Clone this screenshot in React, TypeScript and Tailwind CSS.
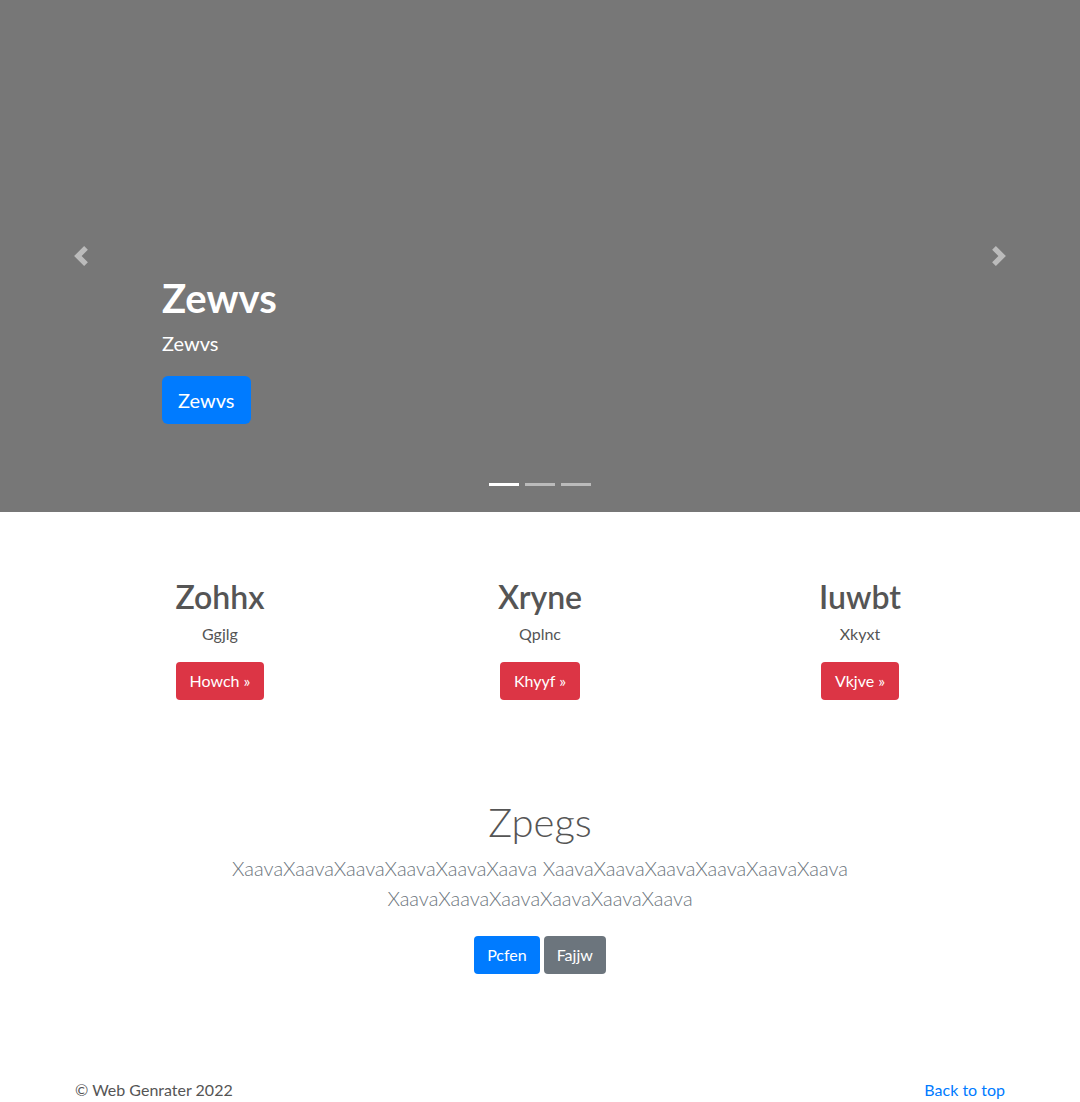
import React from "react";

const font = { fontFamily: "Lato, 'Noto Sans', 'Liberation Sans', sans-serif" };

function Prev() {
  return (
    <svg width="20" height="20" viewBox="0 0 8 8" fill="#fff">
      <path d="M5.25 0l-4 4 4 4 1.5-1.5L4.25 4l2.5-2.5L5.25 0z" />
    </svg>
  );
}
function Next() {
  return (
    <svg width="20" height="20" viewBox="0 0 8 8" fill="#fff">
      <path d="M2.75 0l-1.5 1.5L3.75 4l-2.5 2.5L2.75 8l4-4-4-4z" />
    </svg>
  );
}

export default function App() {
  const cols = [
    { h: "Zohhx", p: "Ggjlg", b: "Howch »" },
    { h: "Xryne", p: "Qplnc", b: "Khyyf »" },
    { h: "Iuwbt", p: "Xkyxt", b: "Vkjve »" },
  ];
  return (
    <div className="min-h-[1180px] bg-white text-[#212529]" style={font}>
      <div className="relative h-[512px] bg-[#777777]">
        <div className="absolute left-0 top-0 flex h-full w-[162px] items-center justify-center opacity-50">
          <Prev />
        </div>
        <div className="absolute right-0 top-0 flex h-full w-[162px] items-center justify-center opacity-50">
          <Next />
        </div>
        <div className="absolute left-[162px] top-[274px] text-white">
          <h1 className="text-[40px] font-bold leading-[48px]">Zewvs</h1>
          <p className="mt-[6px] text-[20px] leading-[30px]">Zewvs</p>
          <button className="mt-[18px] h-[48px] rounded-[6px] bg-[#007bff] px-[16px] text-[20px] text-white">Zewvs</button>
        </div>
        <div className="absolute left-0 right-0 top-[483px] flex justify-center gap-[6px]">
          <span className="h-[3px] w-[30px] bg-white" />
          <span className="h-[3px] w-[30px] bg-white opacity-50" />
          <span className="h-[3px] w-[30px] bg-white opacity-50" />
        </div>
      </div>

      <div className="mx-auto w-[960px]">
        <div className="mt-[66px] grid grid-cols-3">
          {cols.map((c) => (
            <div key={c.h} className="flex flex-col items-center px-[15px] text-center">
              <h2 className="text-[32px] font-semibold leading-[38px] text-[#555555]">{c.h}</h2>
              <p className="mt-[6px] text-[16px] leading-[24px] text-[#555555]">{c.p}</p>
              <button className="mt-[16px] h-[38px] rounded-[4px] bg-[#dc3545] px-[14px] text-[16px] text-white">{c.b}</button>
            </div>
          ))}
        </div>

        <div className="mt-[98px] flex flex-col items-center text-center">
          <h1 className="text-[40px] font-light leading-[48px] text-[#555555]">Zpegs</h1>
          <p className="mt-[7px] w-[620px] text-[20px] font-light leading-[30px] text-[#6c757d]">
            XaavaXaavaXaavaXaavaXaavaXaava XaavaXaavaXaavaXaavaXaavaXaava XaavaXaavaXaavaXaavaXaavaXaava
          </p>
          <div className="mt-[23px] flex gap-[4px]">
            <button className="h-[38px] rounded-[4px] bg-[#007bff] px-[13px] text-[16px] text-white">Pcfen</button>
            <button className="h-[38px] rounded-[4px] bg-[#6c757d] px-[13px] text-[16px] text-white">Fajjw</button>
          </div>
        </div>

        <div className="mt-[104px] flex justify-between px-[15px] text-[16px] leading-[24px]">
          <span className="text-[#555555]">© Web Genrater 2022</span>
          <a className="text-[#007bff]" href="#">Back to top</a>
        </div>
      </div>
    </div>
  );
}
